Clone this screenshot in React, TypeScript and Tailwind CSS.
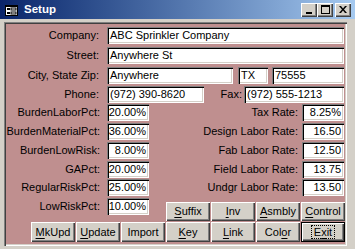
import React from "react"

const sunken =
  "bg-white shadow-[inset_1px_1px_0_#808080,inset_2px_2px_0_#000,inset_-1px_-1px_0_#fff,inset_-2px_-2px_0_#d4d0c8]"
const raised =
  "bg-[#d4d0c8] shadow-[inset_1px_1px_0_#fff,inset_-1px_-1px_0_#404040,inset_-2px_-2px_0_#808080]"

function Box({ value, className = "", right = false }: { value: string; className?: string; right?: boolean }) {
  return (
    <div
      className={`${sunken} flex h-[17px] shrink-0 items-center whitespace-nowrap leading-none ${
        right ? "justify-end pr-[3px]" : "pl-[3px]"
      } ${className}`}
    >
      {value}
    </div>
  )
}

function Btn({ label, u, def = false }: { label: string; u?: number; def?: boolean }) {
  const text =
    u === undefined ? (
      label
    ) : (
      <>
        {label.slice(0, u)}
        <span className="underline underline-offset-[2px]">{label[u]}</span>
        {label.slice(u + 1)}
      </>
    )
  if (def) {
    return (
      <div className="h-full w-[44px] shrink-0 border border-black">
        <div className={`${raised} flex h-full items-center justify-center`}>
          <span className="border border-dotted border-black px-[2px] leading-[12px]">{text}</span>
        </div>
      </div>
    )
  }
  return (
    <div className={`${raised} flex h-full w-[44px] shrink-0 items-center justify-center leading-none`}>
      {text}
    </div>
  )
}

function Row({ label, children, className = "" }: { label: string; children: React.ReactNode; className?: string }) {
  return (
    <div className={`flex h-[17px] items-center ${className}`}>
      <div className="w-[94px] shrink-0 whitespace-nowrap pr-[1px] text-right">{label}</div>
      <div className="ml-[7px] flex flex-1 items-center">{children}</div>
    </div>
  )
}

function PctRow({ left, lv, right, rv, className = "" }: { left: string; lv: string; right: string; rv: string; className?: string }) {
  return (
    <div className={`flex h-[17px] items-center ${className}`}>
      <div className="w-[94px] shrink-0 whitespace-nowrap text-right">{left}</div>
      <Box value={lv} right className="ml-[7px] w-[42px]" />
      <div className="flex-1 whitespace-nowrap pr-[4px] text-right">{right}</div>
      <Box value={rv} right className="mr-[1px] w-[42px]" />
    </div>
  )
}

export default function App() {
  return (
    <div className="flex h-[249px] w-[355px] flex-col overflow-hidden bg-[#d4d0c8] font-['Liberation_Sans',Arial,sans-serif] text-[11px] text-black">
      {/* title bar */}
      <div className="flex h-[19px] shrink-0 items-center bg-gradient-to-r from-[#0a246a] to-[#a6caf0] pr-[4px]">
        <svg width="13" height="11" viewBox="0 0 13 11" className="ml-[5px] mt-[1px]">
          <rect x="0.5" y="0.5" width="12" height="10" fill="#fff" stroke="#000" />
          <rect x="0" y="0" width="13" height="2" fill="#000" />
          <rect x="2" y="3" width="3" height="2" fill="#000" />
          <rect x="6" y="3" width="5" height="2" fill="none" stroke="#000" strokeWidth="1" />
          <rect x="2" y="7" width="3" height="2" fill="#000" />
          <rect x="6" y="7" width="5" height="2" fill="none" stroke="#000" strokeWidth="1" />
        </svg>
        <div className="ml-[6px] text-[11.5px] font-bold text-white">Setup</div>
        <div className="ml-auto flex items-center">
          <div className={`${raised} flex h-[14px] w-[16px] items-end justify-center pb-[3px]`}>
            <div className="h-[2px] w-[6px] bg-black" />
          </div>
          <div className={`${raised} flex h-[14px] w-[16px] items-center justify-center`}>
            <div className="h-[9px] w-[9px] border border-t-2 border-black" />
          </div>
          <div className={`${raised} ml-[2px] flex h-[14px] w-[16px] items-center justify-center`}>
            <svg width="8" height="7" viewBox="0 0 8 7">
              <path d="M0 0h2l2 2.5L6 0h2L5 3.5 8 7H6L4 4.5 2 7H0l3-3.5z" fill="#000" />
            </svg>
          </div>
        </div>
      </div>

      {/* client edge */}
      <div className="ml-[4px] mt-[3px] h-[224px] w-[343px] p-[2px] shadow-[inset_1px_1px_0_#808080,inset_2px_2px_0_#404040,inset_-1px_-1px_0_#fff,inset_-2px_-2px_0_#d4d0c8]">
        <div className="flex h-full flex-col bg-[#bf8f8f] pt-[3px]">
          <Row label="Company:">
            <Box value="ABC Sprinkler Company" className="mr-[1px] flex-1" />
          </Row>
          <Row label="Street:" className="mt-[3px]">
            <Box value="Anywhere St" className="mr-[1px] flex-1" />
          </Row>
          <Row label="City, State Zip:" className="mt-[3px]">
            <Box value="Anywhere" className="w-[126px]" />
            <Box value="TX" className="ml-[5px] w-[30px]" />
            <Box value="75555" className="ml-[4px] mr-[1px] flex-1" />
          </Row>
          <Row label="Phone:" className="mt-[2px]">
            <Box value="(972) 390-8620" className="w-[97px]" />
            <div className="flex-1 pr-[2px] text-right">Fax:</div>
            <Box value="(972) 555-1213" className="mr-[1px] w-[100px]" />
          </Row>
          <PctRow left="BurdenLaborPct:" lv="20.00%" right="Tax Rate:" rv="8.25%" className="mt-[1px]" />
          <PctRow left="BurdenMaterialPct:" lv="36.00%" right="Design Labor Rate:" rv="16.50" className="mt-[2px]" />
          <PctRow left="BurdenLowRisk:" lv="8.00%" right="Fab Labor Rate:" rv="12.50" className="mt-[2px]" />
          <PctRow left="GAPct:" lv="20.00%" right="Field Labor Rate:" rv="13.75" className="mt-[2px]" />
          <PctRow left="RegularRiskPct:" lv="25.00%" right="Undgr Labor Rate:" rv="13.50" className="mt-[1px]" />

          <div className="mt-[2px] flex items-start">
            <div className="flex h-[17px] shrink-0 items-center">
              <div className="w-[94px] shrink-0 text-right">LowRiskPct:</div>
              <Box value="10.00%" right className="ml-[7px] w-[42px]" />
            </div>
            <div className="ml-[17px] mt-[4px] flex h-[19px] gap-[1px]">
              <Btn label="Suffix" u={0} />
              <Btn label="Inv" u={0} />
              <Btn label="Asmbly" u={0} />
              <Btn label="Control" u={0} />
            </div>
          </div>
          <div className="mt-[1px] flex h-[20px] gap-[1px] pl-[25px]">
            <Btn label="MkUpd" u={0} />
            <Btn label="Update" u={0} />
            <Btn label="Import" />
            <Btn label="Key" u={0} />
            <Btn label="Link" u={0} />
            <Btn label="Color" u={3} />
            <Btn label="Exit" u={1} def />
          </div>
        </div>
      </div>
    </div>
  )
}
